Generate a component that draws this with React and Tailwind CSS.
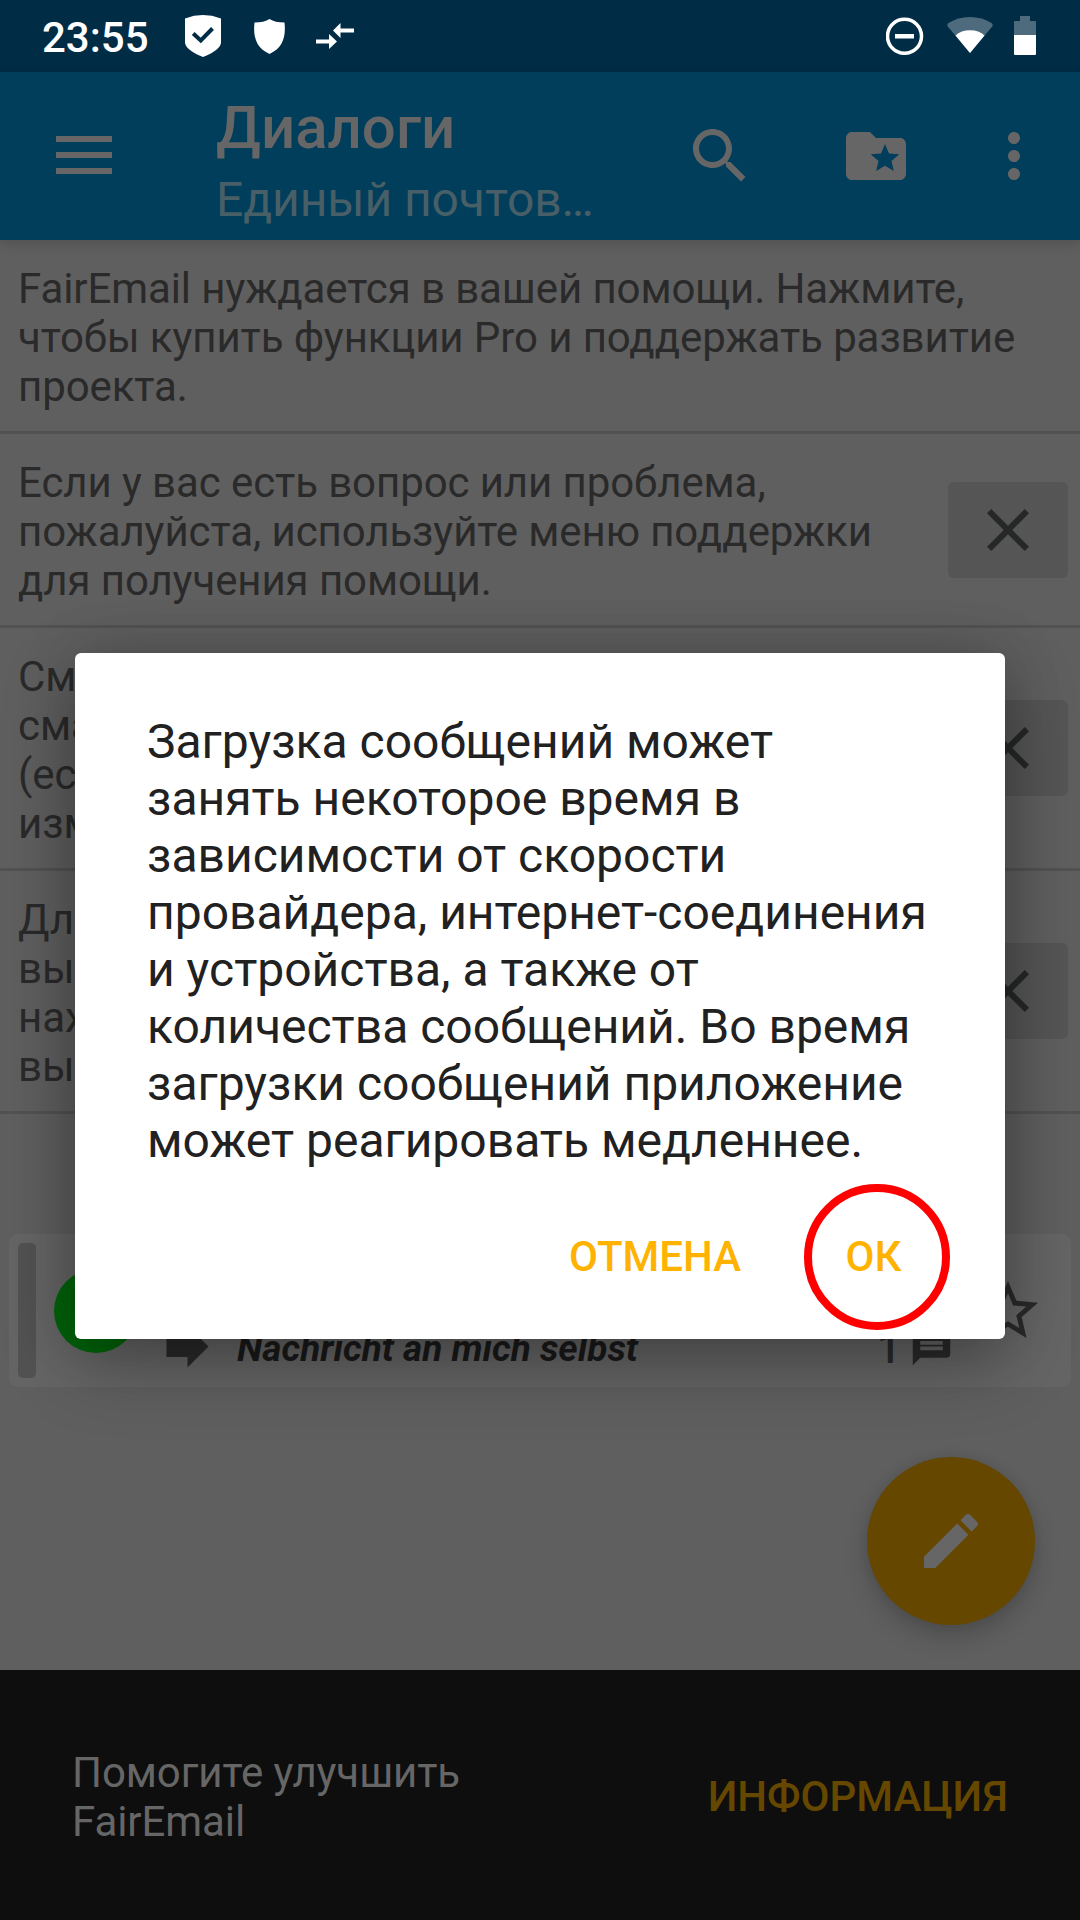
const ICON = {
  search: 'M15.5 14h-.79l-.28-.27C15.41 12.59 16 11.11 16 9.5 16 5.91 13.09 3 9.5 3S3 5.91 3 9.5 5.91 16 9.5 16c1.61 0 3.09-.59 4.23-1.57l.27.28v.79l5 4.99L20.49 19l-4.99-5zm-6 0C7.01 14 5 11.99 5 9.5S7.01 5 9.5 5 14 7.01 14 9.5 11.99 14 9.5 14z',
  folder: 'M20 6h-8l-2-2H4c-1.1 0-1.99.9-1.99 2L2 18c0 1.1.9 2 2 2h16c1.1 0 2-.9 2-2V8c0-1.1-.9-2-2-2zm-2.06 11L15 15.28 12.06 17l.78-3.33-2.59-2.24 3.41-.29L15 8l1.34 3.14 3.41.29-2.59 2.24.78 3.33z',
  more: 'M12 8c1.1 0 2-.9 2-2s-.9-2-2-2-2 .9-2 2 .9 2 2 2zm0 2c-1.1 0-2 .9-2 2s.9 2 2 2 2-.9 2-2-.9-2-2-2zm0 6c-1.1 0-2 .9-2 2s.9 2 2 2 2-.9 2-2-.9-2-2-2z',
  close: 'M19 6.41L17.59 5 12 10.59 6.41 5 5 6.41 10.59 12 5 17.59 6.41 19 12 13.41 17.59 19 19 17.59 13.41 12z',
  forward: 'M12 8V4l8 8-8 8v-4H4V8z',
  message: 'M20 2H4c-1.1 0-1.99.9-1.99 2L2 22l4-4h14c1.1 0 2-.9 2-2V4c0-1.1-.9-2-2-2zm-2 12H6v-2h12v2zm0-3H6V9h12v2zm0-3H6V6h12v2z',
  star: 'M22 9.24l-7.19-.62L12 2 9.19 8.63 2 9.24l5.46 4.73L5.82 21 12 17.27 18.18 21l-1.63-7.03L22 9.24zM12 15.4l-3.76 2.27 1-4.28-3.32-2.88 4.38-.38L12 6.1l1.71 4.04 4.38.38-3.32 2.88 1 4.28L12 15.4z',
  edit: 'M3 17.25V21h3.75L17.81 9.94l-3.75-3.75L3 17.25zM20.71 7.04c.39-.39.39-1.02 0-1.41l-2.34-2.34c-.39-.39-1.02-.39-1.41 0l-1.83 1.83 3.75 3.75 1.83-1.83z',
};

function Icon({ name, className }) {
  return (
    <svg viewBox="0 0 24 24" fill="currentColor" className={`shrink-0 ${className}`}>
      <path d={ICON[name]} />
    </svg>
  );
}

function StatusBar() {
  return (
    <div className="flex h-[72px] shrink-0 items-start bg-[#002c46] text-white">
      <div className="ml-[42px] mt-[13px] w-[143px] text-[42px] leading-[49px] font-medium">23:55</div>
      <svg viewBox="0 0 36 42" className="mt-[15px] h-[42px] w-9">
        <path d="M0 3.500Q18-3.400 36 3.500V28C35 33.500 28 38 18 42C8 38 1 33.500 0 28Z" fill="#fff" />
        <path d="M8.200 18.500L15.800 25.500L27.500 13.500" fill="none" stroke="#002c46" strokeWidth="4" />
      </svg>
      <svg viewBox="0 0 31 35" className="ml-[33px] mt-[19px] h-[35px] w-[31px]">
        <path d="M15.500 0Q21 3.500 30.500 3.500C32 18 29 29 15.500 35C2 29-1 18 .5 3.500Q10 3.500 15.500 0Z" fill="#fff" />
      </svg>
      <svg viewBox="0 0 38 26" fill="#fff" className="ml-[31px] mt-[23px] h-[26px] w-[38px]">
        <path d="M17 7.500L24.500 0V5.500H38V9.500H24.500V15ZM21 18.500L13 26V20.500H0V16.500H13V11Z" />
      </svg>
      <div className="flex-1" />
      <svg viewBox="0 0 38 38" className="mt-[17px] h-[38px] w-[38px]">
        <circle cx="18.500" cy="19.300" r="17" fill="none" stroke="#fff" strokeWidth="3.500" />
        <path d="M9 17h19v4.500H9z" fill="#fff" />
      </svg>
      <svg viewBox="0 0 46 36" className="ml-[23px] mt-[17px] h-9 w-[46px]">
        <path d="M.8 9.500Q-.5 7.500 1.500 6Q11 0 23 0T44.500 6Q46.500 7.500 45.200 9.500L23 36Z" fill="#4e6b7e" />
        <path d="M8.500 18.500Q14 13.300 23 13.300T37.500 18.500L23 36Z" fill="#fff" />
      </svg>
      <svg viewBox="0 0 22 39" className="ml-[21px] mr-[44px] mt-4 h-[39px] w-[22px]">
        <path d="M6 0h10v5h5q1 0 1 1v13H0V6q0-1 1-1h5z" fill="#4e6b7e" />
        <path d="M0 19h22v19q0 1-1 1H1q-1 0-1-1z" fill="#fff" />
      </svg>
    </div>
  );
}

function Toolbar() {
  return (
    <div className="z-10 flex h-[168px] shrink-0 items-center bg-[#003e5b] text-[#666] shadow-[0_3px_12px_rgba(0,0,0,0.16)]">
      <div className="mb-0.5 ml-14 flex w-14 flex-col gap-2.5">
        <div className="h-1.5 bg-[#666]" />
        <div className="h-1.5 bg-[#666]" />
        <div className="h-1.5 bg-[#666]" />
      </div>
      <div className="ml-[104px] w-[400px] pt-[7px]">
        <div className="text-[60px] leading-[71px] font-medium">Диалоги</div>
        <div className="mt-[9px] text-[48px] leading-[56px] tracking-[-0.08px] text-[#485f68]">Единый почтов…</div>
      </div>
      <Icon name="search" className="ml-[68px] size-[72px]" />
      <Icon name="folder" className="ml-[84px] size-[72px]" />
      <Icon name="more" className="ml-[66px] size-[72px]" />
    </div>
  );
}

function Tip({ lines, closable }) {
  return (
    <div className="flex items-center border-b-[3px] border-[#525252] pr-3 pl-[18px] text-[#2a2a2a]">
      <div className="flex-1 pt-6 pb-5 text-[42px] leading-[49px] tracking-[-0.09px] whitespace-nowrap">
        {lines.map((line, index) => (
          <div key={index}>{line}</div>
        ))}
      </div>
      {closable && (
        <button className="flex h-24 w-[120px] shrink-0 items-center justify-center rounded-md bg-[#555] text-[#262828]">
          <Icon name="close" className="size-[72px]" />
        </button>
      )}
    </div>
  );
}

function MessageCard() {
  return (
    <div className="mx-[9px] mt-[120px] flex h-[153px] rounded-[9px] bg-[#656565] text-[#2a2a2a]">
      <div className="my-[9px] ml-[9px] w-[18px] rounded-[5px] bg-[#525252]" />
      <div className="mt-[35px] ml-[18px] size-[84px] rounded-full bg-[#00640a]" />
      <Icon name="forward" className="mt-[81px] ml-[18px] size-[63px]" />
      <div className="mt-[90px] ml-[18px] w-[640px] text-[37px] leading-[49px] font-bold text-[#1a1a1a] italic">
        Nachricht an mich selbst
      </div>
      <div className="mt-[90px] w-[23px] pr-px text-right text-[42px] leading-[49px] font-medium">1</div>
      <Icon name="message" className="mt-[90px] ml-[9px] size-[45px]" />
      <Icon name="star" className="mt-[41px] ml-[18px] size-[72px]" />
    </div>
  );
}

function Dialog() {
  return (
    <div className="absolute top-[653px] left-[75px] z-20 flex h-[686px] w-[930px] flex-col rounded-md bg-white shadow-[0_24px_72px_rgba(0,0,0,0.3),0_0_60px_rgba(0,0,0,0.14)]">
      <p className="px-[72px] pt-[60px] text-[48px] leading-[57px] whitespace-nowrap text-[#212121]">
        Загрузка сообщений может
        <br />занять некоторое время в
        <br />зависимости от скорости
        <br />провайдера, интернет-соединения
        <br />и устройства, а также от
        <br />количества сообщений. Во время
        <br />загрузки сообщений приложение
        <br />может реагировать медленнее.
      </p>
      <div className="mt-[15px] flex items-center justify-end pr-[55px] text-[42px] font-medium text-[#ffb300]">
        <button className="mr-[63px] pb-0.5">ОТМЕНА</button>
        <button className="flex size-[146px] items-center justify-center rounded-full border-8 border-[#f00] pr-[7px] pb-0.5">
          ОК
        </button>
      </div>
    </div>
  );
}

export default function App() {
  return (
    <div className="relative flex h-[1920px] w-[1080px] flex-col overflow-hidden bg-[#5f5f5f] font-[Roboto,sans-serif]">
      <StatusBar />
      <Toolbar />
      <div className="relative h-[1430px]">
        <Tip
          lines={['FairEmail нуждается в вашей помощи. Нажмите,', 'чтобы купить функции Pro и поддержать развитие', 'проекта.']}
        />
        <Tip
          closable
          lines={['Если у вас есть вопрос или проблема,', 'пожалуйста, используйте меню поддержки', 'для получения помощи.']}
        />
        <Tip closable lines={['См', 'сма', '(ес', 'изм']} />
        <Tip closable lines={['Дл', 'вы', 'нах', 'вы']} />
        <MessageCard />
        <button className="absolute right-[45px] bottom-[45px] flex size-[168px] items-center justify-center rounded-full bg-[#664700] text-[#666] shadow-[0_12px_24px_rgba(0,0,0,0.18),0_0_12px_rgba(0,0,0,0.08)]">
          <Icon name="edit" className="size-[72px]" />
        </button>
      </div>
      <div className="z-10 flex h-[250px] shrink-0 items-center justify-between bg-[#0e0e0e] px-[72px] text-[42px] leading-[49px] text-[#666]">
        <div className="pt-1 tracking-[-0.08px]">
          Помогите улучшить
          <br />
          FairEmail
        </div>
        <button className="pt-0.5 font-medium text-[#664700]">ИНФОРМАЦИЯ</button>
      </div>
      <Dialog />
    </div>
  );
}
